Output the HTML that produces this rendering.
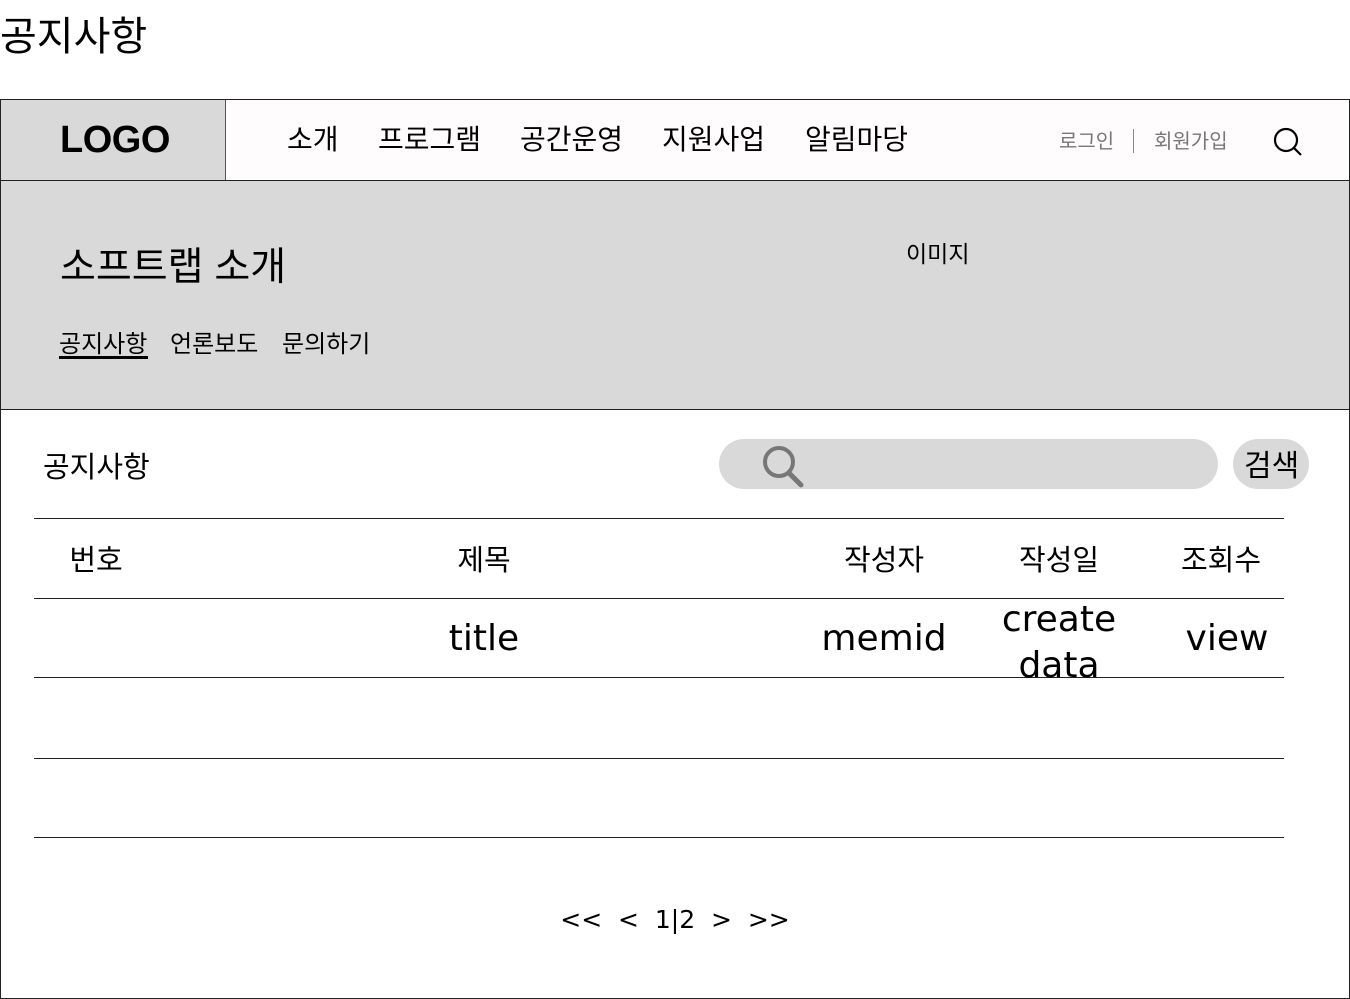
<!DOCTYPE html>
<html><head><meta charset="utf-8"><style>
body{margin:0;width:1350px;height:999px;background:#fff;position:relative;overflow:hidden;font-family:"Liberation Sans","Noto Sans CJK KR",sans-serif;color:#000}
.a{position:absolute;white-space:nowrap;line-height:1}
.c{transform:translateX(-50%)}
.d{font-family:"DejaVu Sans","Noto Sans CJK KR",sans-serif}
.hl{position:absolute;left:34px;width:1250px;height:1px;background:#222}
</style></head><body>
<div class="a" style="left:0;top:17px;font-size:40px">공지사항</div>
<div style="position:absolute;left:0;top:99px;width:1348px;height:898px;border:1px solid #222"></div>
<div style="position:absolute;left:1px;top:100px;width:224px;height:80px;background:#d9d9d9;border-right:1px solid #555"></div>
<div style="position:absolute;left:226px;top:100px;width:1123px;height:80px;background:#fffcfd"></div>
<div style="position:absolute;left:1px;top:180px;width:1348px;height:1px;background:#222"></div>
<div class="a" style="left:60px;top:121px;font-size:38px;font-weight:bold;letter-spacing:-0.5px">LOGO</div>
<div class="a" style="left:287px;top:126px;font-size:28px">소개</div>
<div class="a" style="left:378px;top:126px;font-size:28px">프로그램</div>
<div class="a" style="left:520px;top:126px;font-size:28px">공간운영</div>
<div class="a" style="left:662px;top:126px;font-size:28px">지원사업</div>
<div class="a" style="left:805px;top:126px;font-size:28px">알림마당</div>
<div class="a" style="left:1059px;top:132px;font-size:20px;color:#777">로그인</div>
<div style="position:absolute;left:1133px;top:129px;width:1px;height:24px;background:#888"></div>
<div class="a" style="left:1154px;top:132px;font-size:20px;color:#777">회원가입</div>
<svg style="position:absolute;left:1272px;top:126px" width="32" height="32" viewBox="0 0 32 32"><circle cx="14" cy="14" r="11" fill="none" stroke="#000" stroke-width="2.2"/><line x1="22" y1="22" x2="29" y2="29" stroke="#000" stroke-width="2.2"/></svg>
<div style="position:absolute;left:1px;top:181px;width:1348px;height:228px;background:#d9d9d9;border-bottom:1px solid #222"></div>
<div class="a" style="left:60px;top:248px;font-size:39px">소프트랩 소개</div>
<div class="a" style="left:906px;top:243px;font-size:23px">이미지</div>
<div class="a" style="left:59px;top:333px;font-size:24px">공지사항</div>
<div style="position:absolute;left:59px;top:356px;width:89px;height:3px;background:#000"></div>
<div class="a" style="left:170px;top:333px;font-size:24px">언론보도</div>
<div class="a" style="left:282px;top:333px;font-size:24px">문의하기</div>
<div class="a" style="left:43px;top:454px;font-size:29px">공지사항</div>
<div style="position:absolute;left:719px;top:439px;width:499px;height:50px;border-radius:25px;background:#d9d9d9"></div>
<svg style="position:absolute;left:760px;top:443px" width="48" height="46" viewBox="0 0 48 46"><circle cx="19" cy="19" r="14" fill="none" stroke="#777" stroke-width="4"/><line x1="29" y1="30" x2="41" y2="42" stroke="#777" stroke-width="5" stroke-linecap="round"/></svg>
<div style="position:absolute;left:1233px;top:439px;width:76px;height:50px;border-radius:25px;background:#d9d9d9"></div>
<div class="a" style="left:1244px;top:452px;font-size:30px">검색</div>
<div class="hl" style="top:518px"></div>
<div class="hl" style="top:598px"></div>
<div class="hl" style="top:677px"></div>
<div class="hl" style="top:758px"></div>
<div class="hl" style="top:837px"></div>
<div class="a c" style="left:96px;top:547px;font-size:29px">번호</div>
<div class="a c" style="left:484px;top:547px;font-size:29px">제목</div>
<div class="a c" style="left:884px;top:547px;font-size:29px">작성자</div>
<div class="a c" style="left:1059px;top:547px;font-size:29px">작성일</div>
<div class="a c" style="left:1221px;top:547px;font-size:29px">조회수</div>
<div class="a c d" style="left:484px;top:621px;font-size:36px">title</div>
<div class="a c d" style="left:884px;top:621px;font-size:36px">memid</div>
<div class="a c d" style="left:1059px;top:597px;font-size:36px;text-align:center;line-height:46px">create<br>data</div>
<div class="a c d" style="left:1227px;top:621px;font-size:36px">view</div>
<div class="a c d" style="left:675px;top:907px;font-size:25px">&lt;&lt; &nbsp;&lt; &nbsp;1|2 &nbsp;&gt; &nbsp;&gt;&gt;</div>
</body></html>
